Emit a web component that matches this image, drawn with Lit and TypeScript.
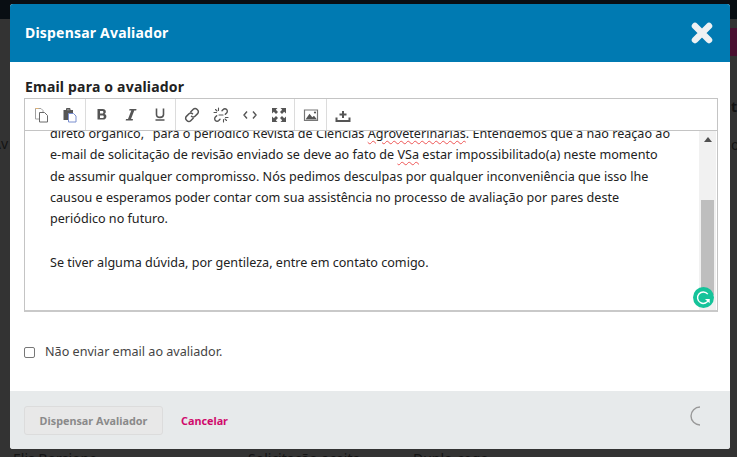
import { LitElement, html, css, svg } from "lit";
import { customElement } from "lit/decorators.js";

const ic = (body: unknown) => html`<svg class="ic" viewBox="0 0 16 16" width="16" height="16">${body}</svg>`;

const G = "#555";
const icons = {
  copy: svg`<path d="M2.500 1.500h5.500l2 2v8.500h-7.500z" fill="#fff" stroke="#a0a0a0"/><path d="M6.500 5.500h5l3 3v6.500h-8z" fill="#fff" stroke="#6a6a6a"/><path d="M2.500 1.500h3" stroke="#e0b070"/>`,
  paste: svg`<path d="M1.500 3h9.500v10H1.500z" fill="${G}"/><path d="M4.500 1.500h3.500V4H4.500z" fill="#888" stroke="${G}"/><path d="M6.500 6.500h5l2.500 2.500v6h-7.500z" fill="#fff" stroke="#7a8fcf"/>`,
  bold: svg`<path fill-rule="evenodd" fill="${G}" d="M3.500 2h5.200c2 0 3.100 1 3.100 2.800 0 1-.5 1.700-1.300 2.100 1.200.3 1.900 1.200 1.900 2.500 0 2-1.300 3.100-3.500 3.100H3.500zM6 4v2.600h2.200c.8 0 1.200-.5 1.200-1.300S9 4 8.200 4zM6 8.500V11h2.500c.8 0 1.300-.5 1.300-1.250S9.300 8.500 8.500 8.500z"/>`,
  italic: svg`<path fill="${G}" d="M6.500 2h7l-.3 1.500H11.300L8 12h2l-.3 1.500h-7L3 12h2L8.300 3.500H6.200z"/>`,
  under: svg`<path fill="none" stroke="${G}" stroke-width="1.600" d="M4.500 1.500V7.500c0 2 1.300 2.900 3.500 2.900s3.500-.9 3.500-2.900V1.500"/><path stroke="${G}" stroke-width="1.500" d="M3.500 13h9"/>`,
  link: svg`<g fill="none" stroke="${G}" stroke-width="1.500" stroke-linecap="round"><path d="M6.800 4.800 9.300 2.300a2.500 2.500 0 0 1 3.600 0l.7.700a2.500 2.500 0 0 1 0 3.600L11 9.200a2.500 2.500 0 0 1-3.500 0"/><path d="M9.200 11.200 6.700 13.700a2.500 2.500 0 0 1-3.600 0l-.7-.7a2.500 2.500 0 0 1 0-3.600L5 6.800a2.500 2.500 0 0 1 3.500 0"/></g>`,
  unlink: svg`<g fill="none" stroke="${G}" stroke-width="1.400" stroke-linecap="round"><path d="M9 3.800l1.200-1.300a2.400 2.400 0 0 1 3.400 0 2.400 2.400 0 0 1 0 3.400l-1.300 1.300"/><path d="M7 12.200l-1.200 1.300a2.400 2.400 0 0 1-3.400 0 2.400 2.400 0 0 1 0-3.400l1.300-1.300"/><path d="M5.500 1v2.500M1 5.500h2.500M10.500 12.500V15M12.500 10.500H15M2.500 2.500l1.500 1.500M12 12l1.500 1.500M6 8l4 0" stroke-width="1.100"/></g>`,
  code: svg`<path fill="none" stroke="${G}" stroke-width="1.400" d="M5 4.500 2 8l3 3.500M11 4.500 14 8l-3 3.500"/>`,
  full: svg`<path fill="${G}" d="M1 1h5.500L4.800 2.800 7 5 5 7 2.800 4.800 1 6.500zM15 1v5.500l-1.800-1.700L11 7 9 5l2.200-2.200L9.500 1zM1 15V9.500l1.800 1.700L5 9l2 2-2.200 2.200L6.500 15zM15 15H9.500l1.700-1.800L9 11l2-2 2.200 2.200L15 9.500z"/>`,
  image: svg`<path fill="#fff" stroke="#777" stroke-width="1.200" d="M1.500 3h13v10.500h-13z"/><path fill="${G}" d="M2.500 12.500 6.500 6.800l2.800 3.400 1.700-1.400 3 3.700z"/><circle cx="12" cy="5.500" r="1.100" fill="${G}"/>`,
  upload: svg`<path fill="${G}" d="M.5 10.500h2v2.500h11v-2.500h2v4.500H.5z"/><path fill="${G}" d="M7 4h2v2.500h2.500v2H9V11H7V8.500H4.500v-2H7z"/>`,
};

@customElement("app-root")
export class AppRoot extends LitElement {
  static styles = css`
    :host {
      display: block;
      width: 737px;
      height: 457px;
      overflow: hidden;
      position: relative;
      background: #333333;
      font-family: "Noto Sans", sans-serif;
      color: rgba(0, 0, 0, 0.87);
    }
    .back {
      position: absolute;
      inset: 0;
      color: #141414;
      font-size: 14px;
    }
    .top { position: absolute; left: 0; right: 0; top: 0; height: 19px; background: #090e13; }
    .band { position: absolute; right: 0; top: 28px; width: 7px; height: 28px; background: #4a1030; }
    .peek { position: absolute; white-space: nowrap; font-weight: 400; }
    .modal {
      position: absolute;
      left: 10px;
      top: 4px;
      width: 720px;
      height: 445px;
      background: #fff;
      border-radius: 3px;
      display: flex;
      flex-direction: column;
      overflow: hidden;
    }
    header {
      height: 58px;
      flex: none;
      background: #007ab2;
      color: #fff;
      display: flex;
      align-items: center;
      justify-content: space-between;
      padding: 0 15px 2px;
      box-sizing: border-box;
      font-size: 14px;
      font-weight: 700;
      letter-spacing: 0.2px;
    }
    .close { width: 22px; height: 22px; margin: 2px 2px 0 0; display: block; }
    main { flex: 1; padding: 15px 14px 0; min-height: 0; position: relative; }
    h2 {
      margin: 0 0 0 1px;
      font-size: 14px;
      line-height: 19px;
      font-weight: 700;
      letter-spacing: 0.2px;
      color: #222;
    }
    .editor { margin-top: 2px; width: 694px; box-sizing: border-box; }
    .toolbar {
      height: 33px;
      box-sizing: border-box;
      border: 1px solid #c4c4c4;
      display: flex;
      background: #fff;
    }
    .group { display: flex; align-items: center; padding: 0 1px; border-right: 1px solid #dcdcdc; height: 100%; }
    .group:last-child { border-right: 0; }
    .tb { width: 29px; height: 100%; display: flex; align-items: center; justify-content: center; }
    .ic { display: block; }
    .body {
      height: 181px;
      box-sizing: border-box;
      border: 1px solid #c4c4c4;
      border-top: 0;
      border-bottom: 2px solid #c9c9c9;
      position: relative;
      overflow: hidden;
      display: flex;
    }
    .content {
      flex: 1;
      margin-top: -8px;
      padding-left: 25px;
      font-size: 12.6px;
      line-height: 21.33px;
      color: #222;
    }
    .content p { margin: 0; }
    .content p + p { margin-top: 22px; }
    .sp { text-decoration: underline wavy #e55; text-decoration-thickness: 1px; text-underline-offset: 2px; }
    .scroll {
      width: 17px;
      flex: none;
      margin-right: 1px;
      background: #f1f1f1;
      position: relative;
      display: flex;
      flex-direction: column;
      align-items: center;
    }
    .arrow { width: 0; height: 0; border: 4px solid transparent; border-top: 0; border-bottom: 5px solid #505050; margin-top: 6px; }
    .thumb { position: absolute; left: 2px; right: 2px; top: 69px; bottom: 15px; background: #bebebe; }
    .gram {
      position: absolute;
      right: 3px;
      bottom: 2px;
      width: 21px;
      height: 21px;
    }
    .check {
      display: flex;
      align-items: center;
      margin: 31px 0 0;
      font-size: 12.6px;
      line-height: 18px;
      color: #444;
    }
    .box {
      width: 11px;
      height: 11px;
      box-sizing: border-box;
      border: 1px solid #777;
      border-radius: 2px;
      background: #fff;
      margin-right: 10px;
    }
    footer {
      flex: none;
      height: 58px;
      background: #e7eaeb;
      display: flex;
      align-items: center;
      padding: 0 14px;
      position: relative;
    }
    .btn {
      width: 139px;
      height: 29px;
      box-sizing: border-box;
      border: 1px solid #dcdcdc;
      border-radius: 3px;
      background: #e8e8e8;
      color: #8a8a8a;
      font-size: 10.8px;
      font-weight: 700;
      display: flex;
      align-items: center;
      justify-content: center;
    }
    .cancel { margin-left: 18px; color: #d00a6c; font-size: 10.8px; font-weight: 700; }
    .spin { margin: 0 9px 8px auto; width: 20px; height: 20px; display: block; }
  `;

  render() {
    const groups = [
      [icons.copy, icons.paste],
      [icons.bold, icons.italic, icons.under],
      [icons.link, icons.unlink, icons.code, icons.full],
      [icons.image],
      [icons.upload],
    ];
    return html`
      <div class="back">
        <div class="top"></div>
        <div class="band"></div>
        <span class="peek" style="left:-8px;top:134px">Av</span>
        <span class="peek" style="left:13px;top:449px">Elis Borsione</span>
        <span class="peek" style="left:248px;top:449px">Solicitação aceita</span>
        <span class="peek" style="left:413px;top:449px">Duplo-cego</span>
        <span class="peek" style="left:731px;top:97px;font-weight:700">t</span>
        <span class="peek" style="left:731px;top:135px">o</span>
      </div>
      <div class="modal">
        <header>
          <span>Dispensar Avaliador</span>
          <svg class="close" viewBox="0 0 22 22">
            <path d="M4 4 18 18M18 4 4 18" stroke="#eef1f3" stroke-width="6.500" stroke-linecap="round"/>
          </svg>
        </header>
        <main>
          <h2>Email para o avaliador</h2>
          <div class="editor">
            <div class="toolbar">
              ${groups.map(
                (g) => html`<div class="group">${g.map((i) => html`<span class="tb">${ic(i)}</span>`)}</div>`
              )}
            </div>
            <div class="body">
              <div class="content">
                <p>
                  direto orgânico, &nbsp;&#8201;para o periódico Revista de Ciências <span class="sp">Agroveterinárias</span>. Entendemos que a não reação ao<br />
                  e-mail de solicitação de revisão enviado se deve ao fato de <span class="sp">VSa</span> estar impossibilitado(a) neste momento<br />
                  de assumir qualquer compromisso. Nós pedimos desculpas por qualquer inconveniência que isso lhe<br />
                  causou e esperamos poder contar com sua assistência no processo de avaliação por pares deste<br />
                  periódico no futuro.
                </p>
                <p>Se tiver alguma dúvida, por gentileza, entre em contato comigo.</p>
              </div>
              <div class="scroll">
                <div class="arrow"></div>
                <div class="thumb"></div>
              </div>
              <svg class="gram" viewBox="0 0 22 22">
                <circle cx="11" cy="11" r="11" fill="#15c39a"/>
                <path d="M15.500 7.500A6 6 0 1 0 16.500 13" fill="none" stroke="#fff" stroke-width="1.500"/>
                <path d="M12.500 12.500h5v4.500z" fill="#fff"/>
              </svg>
            </div>
          </div>
          <div class="check"><span class="box"></span>Não enviar email ao avaliador.</div>
        </main>
        <footer>
          <div class="btn">Dispensar Avaliador</div>
          <span class="cancel">Cancelar</span>
          <svg class="spin" viewBox="0 0 20 20">
            <path d="M13 1A9 9 0 1 0 13 19" fill="none" stroke="#999" stroke-width="1.400"/>
          </svg>
        </footer>
      </div>
    `;
  }
}
